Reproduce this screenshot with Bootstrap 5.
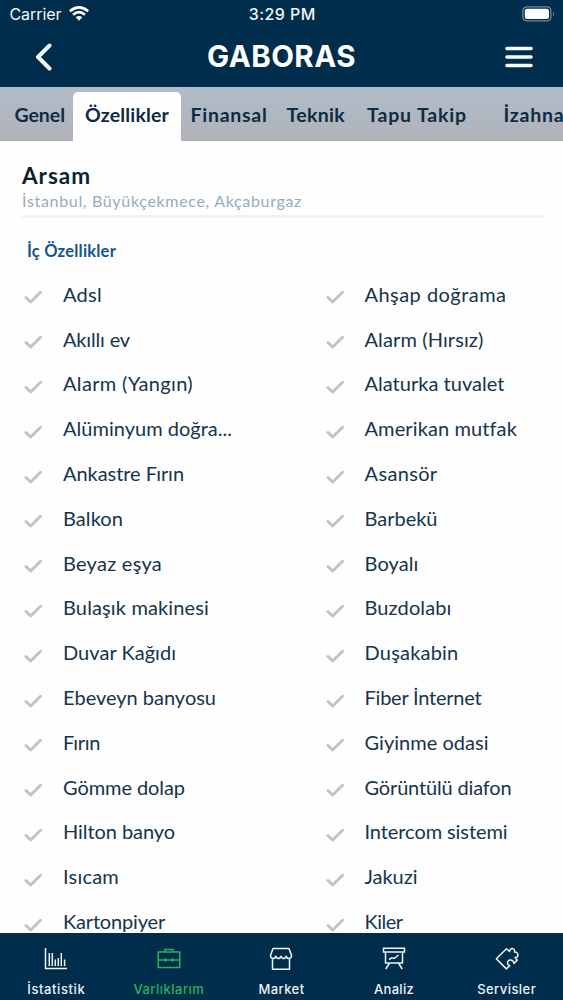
<!DOCTYPE html>
<html lang="tr">
<head>
<meta charset="utf-8">
<meta name="viewport" content="width=device-width, initial-scale=1">
<title>Gaboras</title>
<link href="https://cdn.jsdelivr.net/npm/bootstrap@5.3.0/dist/css/bootstrap.min.css" rel="stylesheet">
<style>
:root { --navy: #002d4b; --ink: #16344c; }
body { font-family: Lato, "Noto Sans", sans-serif; color: var(--ink); }
.screen { height: 1000px; background: #fefefe; }
.system, .dock { font-family: Inter, "Noto Sans", sans-serif; color: #f2f7fa; }
.topbar { height: 87px; background: var(--navy); }
.system { height: 28px; font-size: 16px; padding: 1px 8px 0 9.5px; line-height: 27px; }
.system > div { flex: 1 1 0; }
.clock { font-weight: 500; }
.appbar { height: 59px; padding: 0 30px 0 35px; }
.appbar svg { margin-top: -2px; }
.brand { font: 700 29.5px/57px Inter, sans-serif; color: #fff; margin: -2px 0 0 5px; }
.tabstrip { height: 54px; background: linear-gradient(#b2bbc7, #afb6c0 60%, #b2b3b8); padding: 5px 0 0 14.500px; }
.tabstrip .tab { height: 49px; line-height: 46px; font-size: 19.5px; font-weight: 700; color: #0e2b43; flex: none; }
.tabstrip .on { width: 107.5px; padding-left: 12px; margin: 0 10px 0 8px; background: #fefefe; border-radius: 5px 5px 0 0; }
.heading { margin: 0 20px 0 22px; height: 77px; padding-top: 22px; border-bottom: 3px solid #eff3f6; }
.heading h1 { font-size: 22.5px; line-height: 26px; font-weight: 700; color: #0b1f33; margin: 0; }
.heading p { font-size: 16px; line-height: 24px; color: #98abbb; margin: 0; }
.group { font-size: 16.5px; line-height: 24px; font-weight: 700; color: #13558c; margin: 20.5px 0 0 27px; }
.features { padding: 9px 0 0 24px; }
.feature { height: 44.8px; font-size: 20px; }
.feature svg { margin: 7px 21px 0 0; flex: none; }
.features .start { width: 301.5px; }
.dock { height: 67px; background: var(--navy); font-size: 13px; font-weight: 500; }
.dock a { flex: 1 1 0; color: #eef4f7; padding-top: 14px; }
.dock a.active { color: #27b15c; }
.dock span { line-height: 16px; margin-top: 10px; }
</style>
</head>
<body>
<div class="screen d-flex flex-column overflow-hidden">
  <header class="topbar flex-shrink-0">
    <div class="system d-flex">
      <div class="d-flex align-items-center"><span data-w="52">Carrier</span>
        <svg style="margin:-2px 0 0 7px" width="20" height="16" viewBox="0 0 20 16" fill="none" stroke="#fff" stroke-width="2.7"><path d="M.8 5.300Q10-2.500 19.200 5.300M4.100 8.700Q10 3.600 15.900 8.700"/><path d="M6.700 11.300Q10 8.500 13.300 11.300L10 14.800Z" fill="#fff" stroke="none"/></svg>
      </div>
      <div class="clock text-center"><span data-w="67">3:29 PM</span></div>
      <div class="d-flex align-items-center justify-content-end">
        <svg style="margin-top:-2px" width="33" height="16" viewBox="0 0 33 16"><rect x=".9" y=".9" width="28" height="14" rx="4" fill="none" stroke="#6f8da1" stroke-width="1.3"/><rect x="2.8" y="2.8" width="24.2" height="10.2" rx="2.3" fill="#fff"/><path d="M31 5.500q2 2.400 0 4.800z" fill="#8099aa"/></svg>
      </div>
    </div>
    <div class="appbar d-flex align-items-center justify-content-between">
      <svg width="18" height="28" viewBox="0 0 18 28" fill="none" stroke="#f6fbff" stroke-width="4" stroke-linecap="round" stroke-linejoin="round"><path d="M14.500 2.500 3 14l11.500 11.500"/></svg>
      <div class="brand"><span data-w="149">GABORAS</span></div>
      <svg width="28" height="22" viewBox="0 0 28 22" stroke="#f6fbff" stroke-width="3.6" stroke-linecap="round"><path d="M2 2.500h24M2 11h24M2 19.500h24"/></svg>
    </div>
  </header>
  <nav class="tabstrip d-flex flex-shrink-0 overflow-hidden">
    <div class="tab"><span data-w="50.5">Genel</span></div>
    <div class="tab on"><span data-w="84">Özellikler</span></div>
    <div class="tab"><span data-w="77">Finansal</span></div>
    <div class="tab" style="margin-left:19px"><span data-w="58.5">Teknik</span></div>
    <div class="tab" style="margin-left:22px"><span data-w="100">Tapu Takip</span></div>
    <div class="tab" style="margin-left:36.5px"><span data-w="89">İzahname</span></div>
  </nav>
  <main class="flex-grow-1 overflow-hidden" style="min-height:0">
    <div class="heading"><h1><span data-w="69">Arsam</span></h1><p><span data-w="280">İstanbul, Büyükçekmece, Akçaburgaz</span></p></div>
    <h2 class="group"><span data-w="89">İç Özellikler</span></h2>
    <div class="features" id="features"></div>
  </main>
  <nav class="dock d-flex flex-shrink-0">
    <a class="d-flex flex-column align-items-center text-decoration-none">
      <svg width="24" height="24" viewBox="0 0 24 24" fill="none" stroke="currentColor" stroke-width="1.5"><path d="M1.500 1v20.500H23M5.300 6v13M8.300 6v13M11.300 12.500v6.500M14.300 11v8M17.300 6v13M20.600 12.500v6.500"/></svg><span data-w="58">İstatistik</span></a>
    <a class="active d-flex flex-column align-items-center text-decoration-none">
      <svg width="24" height="24" viewBox="0 0 24 24" fill="none" stroke="currentColor" stroke-width="1.5"><path d="M1.200 5h21.600v15.500H1.200zM8 5V2.500h8V5M1.200 13h21.600M8.500 11v4M15.500 11v4"/></svg><span data-w="71">Varlıklarım</span></a>
    <a class="d-flex flex-column align-items-center text-decoration-none">
      <svg width="24" height="24" viewBox="0 0 24 24" fill="none" stroke="currentColor" stroke-width="1.5" stroke-linejoin="round"><path d="M4 1.500h16l2.500 7q0 3-2.700 3-2 0-2.600-2.200-.8 2.200-2.600 2.200T12 9.300q-.8 2.200-2.600 2.200T6.800 9.300q-.6 2.200-2.600 2.200-2.700 0-2.700-3zM3.500 11.500v10.700h17V11.500"/></svg><span data-w="46">Market</span></a>
    <a class="d-flex flex-column align-items-center text-decoration-none">
      <svg width="24" height="24" viewBox="0 0 24 24" fill="none" stroke="currentColor" stroke-width="1.500"><path d="M1.500 1.200h21v3.800h-21zM3.500 5v11h17V5M7.500 16 3.800 22M16.500 16l3.700 6M7 12.500l3-1.700 2.200.7L16.500 8"/></svg><span data-w="40">Analiz</span></a>
    <a class="d-flex flex-column align-items-center text-decoration-none">
      <svg width="24" height="24" viewBox="0 0 24 24" fill="none" stroke="currentColor" stroke-width="1.500" stroke-linejoin="round"><path d="M1.300 11.800 11.500 1.700l3 2.800C14.500.3 20.500.8 19.500 5.100 23.800 4.800 24 10.300 20 10.600l2.200 2.500-3.300 3.300c-.4-5.200-7.800-4-6.200.8l2 1.500-3.300 3.200z"/></svg><span data-w="59">Servisler</span></a>
  </nav>
</div>
<script src="https://cdn.jsdelivr.net/npm/bootstrap@5.3.0/dist/js/bootstrap.bundle.min.js"></script>
<script>
// Each row: left label, its width, right label, its width
const rows = [
  ["Adsl", 39, "Ahşap doğrama", 142], ["Akıllı ev", 67, "Alarm (Hırsız)", 119],
  ["Alarm (Yangın)", 130, "Alaturka tuvalet", 140], ["Alüminyum doğra...", 169, "Amerikan mutfak", 152],
  ["Ankastre Fırın", 121, "Asansör", 73], ["Balkon", 60, "Barbekü", 73],
  ["Beyaz eşya", 99, "Boyalı", 54], ["Bulaşık makinesi", 146, "Buzdolabı", 87],
  ["Duvar Kağıdı", 113, "Duşakabin", 94], ["Ebeveyn banyosu", 153, "Fiber İnternet", 117],
  ["Fırın", 37, "Giyinme odasi", 124], ["Gömme dolap", 122, "Görüntülü diafon", 147],
  ["Hilton banyo", 112, "Intercom sistemi", 143], ["Isıcam", 56, "Jakuzi", 53],
  ["Kartonpiyer", 102, "Kiler", 38]
];
const check = '<svg width="18" height="14" viewBox="0 0 18 14" fill="none" stroke="#c3c3c5" stroke-width="2.9" stroke-linecap="round" stroke-linejoin="round"><path d="M2 7.500 6.700 12 16.500 2.300"/></svg>';
const cell = (t, w, c) => `<div class="feature d-flex align-items-center ${c}">${check}<span data-w="${w}">${t}</span></div>`;
document.getElementById("features").innerHTML = rows.map(r =>
  `<div class="d-flex">${cell(r[0], r[1], "start")}${cell(r[2], r[3], "")}</div>`).join("");
// Track each label out to its width
document.querySelectorAll("[data-w]").forEach(el => {
  el.style.whiteSpace = "nowrap";
  const range = document.createRange();
  range.selectNodeContents(el);
  const gap = (el.dataset.w - range.getBoundingClientRect().width) / el.textContent.length;
  el.style.letterSpacing = gap.toFixed(3) + "px";
});
</script>
</body>
</html>
